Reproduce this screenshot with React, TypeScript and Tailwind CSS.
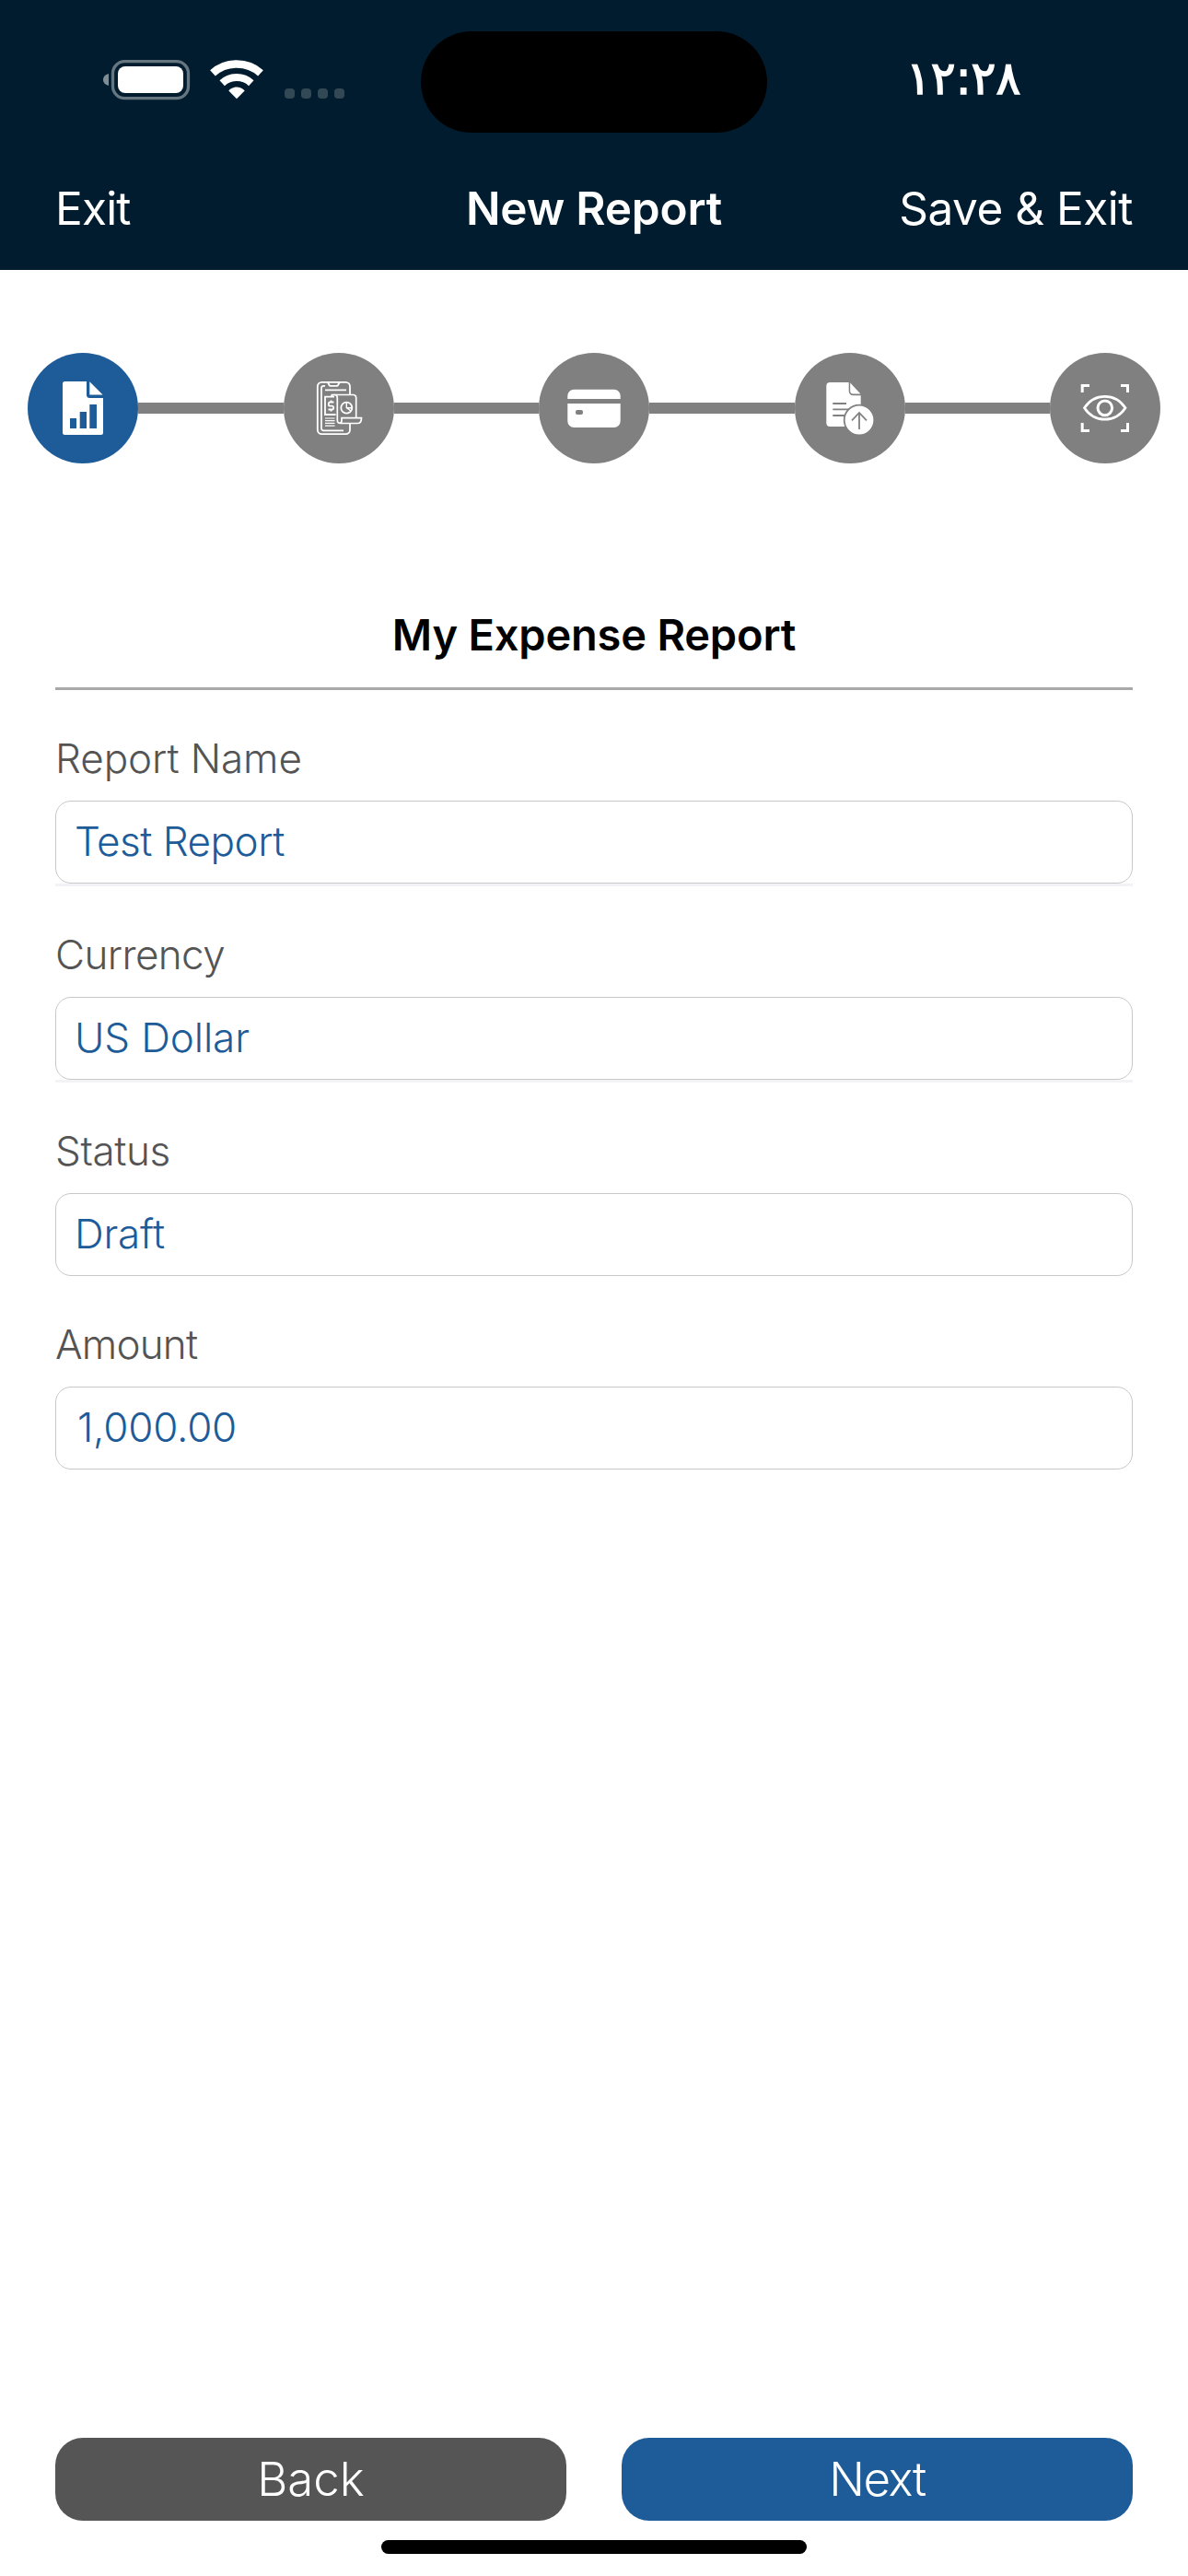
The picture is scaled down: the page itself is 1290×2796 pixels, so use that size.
import type { ReactNode } from "react";

const ReportIcon = () => (
  <svg viewBox="0 0 120 120" className="size-[120px]">
    <path fill="#fff" d="M40.5 31H64v14.5a3.5 3.5 0 0 0 3.5 3.5H82v37.5a2.5 2.5 0 0 1-2.5 2.5h-39a2.5 2.5 0 0 1-2.5-2.5v-53a2.5 2.5 0 0 1 2.5-2.5z" />
    <path fill="#fff" d="M67.3 31.2l14.3 14.2H67.3z" />
    <path fill="#1e5c99" d="M46 71h7v11h-7zM56.7 64h7.3v18h-7.3zM67.3 56H75v26h-7.7z" />
  </svg>
);

const PhoneReceiptIcon = () => (
  <svg viewBox="0 0 120 120" className="size-[120px]" fill="none" stroke="#fff" strokeWidth="1.8">
    <path d="M72 45v-8.5a4.700 4.700 0 0 0-4.700-4.700H41.500a4.700 4.700 0 0 0-4.700 4.700v47a4.700 4.700 0 0 0 4.700 4.700h25.800a4.700 4.700 0 0 0 4.700-4.700V77" />
    <path d="M45 35.800h-1.500a2.500 2.500 0 0 0-2.500 2.500v43.500a2.500 2.500 0 0 0 2.500 2.500H65" strokeWidth="1.700" />
    <path d="M48 32l1.500 3a1.500 1.500 0 0 0 1.300.8h7a1.500 1.500 0 0 0 1.300-.8l1.500-3M45 40.300h23" />
    <path d="M55 47.700H45v19.300h11.500" />
    <path d="M51.500 45.500H75.500a3.200 3.200 0 0 1 3.200 3.200V70M51.500 47.500c1-2 2.500-2.200 3.500-2.200 2.500 0 3.300 1.500 3.300 4V73c0 2.500 1.200 3.500 3.500 3.500H80c3 0 4.500-2 4.500-5.800H63v2.500c0 2-.8 3-2 3" strokeWidth="1.700" />
    <path d="M54.500 53.500h-4a1.700 1.700 0 0 0-1.700 1.700v.7a1.700 1.700 0 0 0 1.700 1.700h2a1.700 1.700 0 0 1 1.700 1.700v.5a1.700 1.700 0 0 1-1.700 1.700h-4M51.500 51.500v2M51.500 61.500v2" />
    <path d="M45 71h10.500M45 73.700h10.500M45 76.400h10.500M45 79.100h10.500" strokeWidth="1.200" />
    <circle cx="68.300" cy="59.700" r="6" />
    <path d="M68.300 53.700v6l4.800 3.300M68.300 59.700h6" strokeWidth="1.400" />
  </svg>
);

const CardIcon = () => (
  <svg viewBox="0 0 120 120" className="size-[120px]">
    <path fill="#fff" d="M38.300 39.700h43.400a7 7 0 0 1 7 7V50H31.300v-3.300a7 7 0 0 1 7-7zM31.300 55h57.400v19a7 7 0 0 1-7 7H38.300a7 7 0 0 1-7-7z" />
    <rect x="40" y="62" width="8" height="5" rx="2" fill="#808080" />
  </svg>
);

const UploadIcon = () => (
  <svg viewBox="0 0 120 120" className="size-[120px]" fill="none">
    <path fill="#fff" d="M38.300 32H58.700v9.500a4.800 4.800 0 0 0 4.800 4.800h8.200V80H38.300a4 4 0 0 1-4-4V36a4 4 0 0 1 4-4z" />
    <path fill="#fff" d="M60.200 32.500l11.200 12h-8a3.200 3.200 0 0 1-3.200-3.200z" />
    <path stroke="#808080" strokeWidth="1.800" d="M41.300 55H56M41.300 61.300h20M41.300 68H56" />
    <circle cx="70" cy="73" r="16.300" fill="#fff" stroke="#808080" strokeWidth="1.800" />
    <path stroke="#808080" strokeWidth="1.800" d="M70 83V65M62 73.300l8-8.300 8 8.300" />
  </svg>
);

const PreviewIcon = () => (
  <svg viewBox="0 0 120 120" className="size-[120px]" fill="none" stroke="#fff" strokeWidth="3">
    <path d="M43 35.500h-7.800V43M77 35.500h7.500V43M43 84.500h-7.800V76M77 84.500h7.500V76" />
    <path strokeWidth="2.700" d="M37.500 59.700C43 51.500 50 47.300 59.700 47.300S76.500 51.500 82 59.700C76.500 68 69.400 72.200 59.700 72.200S43 68 37.500 59.700z" />
    <ellipse cx="59.800" cy="59.800" rx="7.800" ry="7.900" />
  </svg>
);

const steps: { icon: ReactNode; active?: boolean }[] = [
  { icon: <ReportIcon />, active: true },
  { icon: <PhoneReceiptIcon /> },
  { icon: <CardIcon /> },
  { icon: <UploadIcon /> },
  { icon: <PreviewIcon /> },
];

const StatusIcons = () => (
  <svg viewBox="0 0 270 44" className="h-[44px] w-[270px]">
    <path d="M6 15v13C2.500 27 0 25 0 21.500S2.500 16 6 15z" fill="#808d95" />
    <rect x="10.500" y="1.700" width="82" height="40" rx="13" fill="none" stroke="#667680" strokeWidth="3.300" />
    <rect x="16" y="7" width="71" height="29" rx="8" fill="#fff" />
    <g fill="none" stroke="#fff">
      <path d="M119 14.300C133.500 1.200 156.500 1.200 171 14.300" strokeWidth="8.500" />
      <path d="M129.200 25.200C138 17 152 17 160.800 25.200" strokeWidth="8" />
    </g>
    <path d="M145 42.300l-8.700-8.900c4.500-5.300 12.900-5.300 17.400 0z" fill="#fff" />
    <g fill="#334855">
      <rect x="197" y="31" width="11" height="11" rx="4" />
      <rect x="215" y="31" width="11" height="11" rx="4" />
      <rect x="233" y="31" width="11" height="11" rx="4" />
      <rect x="251" y="31" width="11" height="11" rx="4" />
    </g>
  </svg>
);

type FieldProps = { label: string; value: string; line?: boolean; gap: string; labelClass: string; valueClass: string };

const Field = ({ label, value, line, gap, labelClass, valueClass }: FieldProps) => (
  <div className={gap}>
    <div className={"h-[54px] text-[44px] leading-[54px] font-light text-[#545454] " + labelClass}>{label}</div>
    <div className="mt-[19px] flex h-[90px] items-start rounded-[17px] border border-[#c8c8c8] pt-[16px] pl-[20px] text-[44px] leading-[54px] font-light text-[#1e5c99]">
      <span className={valueClass}>{value}</span>
    </div>
    <div className={line ? "h-[3px] bg-[#f2f2f7]" : "h-[3px]"} />
  </div>
);

export default function App() {
  return (
    <div className="flex h-[2796px] w-[1290px] flex-col bg-white font-['Inter',sans-serif]">
      <header className="h-[293px] bg-[#001c2e] text-white">
        <div className="flex h-[176px] items-start">
          <div className="w-[457px] pt-[65px] pl-[112px]">
            <StatusIcons />
          </div>
          <div className="mt-[34px] h-[110px] w-[376px] rounded-full bg-black" />
          <div className="flex-1 pt-[60px] pl-[151px] font-['DejaVu_Sans',sans-serif] text-[50px] leading-[50px] [-webkit-text-stroke:1.5px_white]">١٢:٢٨</div>
        </div>
        <div className="grid h-[100px] grid-cols-3 items-center px-[60px] text-[49.500px] leading-[60px]">
          <span className="tracking-[-0.8px]">Exit</span>
          <span className="text-center font-semibold tracking-[-0.2px]">New Report</span>
          <span className="text-right tracking-[-0.500px] whitespace-nowrap">Save &amp; Exit</span>
        </div>
      </header>

      <nav className="mt-[90px] flex items-center px-[30px]">
        {steps.map((s, i) => (
          <div key={i} className={i ? "flex flex-1 items-center" : "flex items-center"}>
            {i > 0 && <div className="h-[12px] flex-1 bg-[#808080]" />}
            <div className={s.active ? "size-[120px] rounded-full bg-[#1e5c99]" : "size-[120px] rounded-full bg-[#808080]"}>{s.icon}</div>
          </div>
        ))}
      </nav>

      <main className="mt-[156px] flex-1 px-[60px]">
        <h1 className="h-[87px] text-center text-[47px] leading-[60px] font-semibold tracking-[-0.2px] text-black">My Expense Report</h1>
        <div className="h-[3px] bg-[#a9a9a9]" />
        <Field label="Report Name" value="Test Report" line gap="mt-[47px]" labelClass="tracking-[-0.1px]" valueClass="tracking-[-0.500px]" />
        <Field label="Currency" value="US Dollar" line gap="mt-[47px]" labelClass="tracking-[-0.6px]" valueClass="tracking-[-0.1px]" />
        <Field label="Status" value="Draft" gap="mt-[47px]" labelClass="tracking-[-0.400px]" valueClass="tracking-[-0.2px]" />
        <Field label="Amount" value="1,000.00" gap="mt-[44px]" labelClass="tracking-[-0.8px]" valueClass="pl-[3px] tracking-[-0.2px]" />
      </main>

      <footer className="h-[150px] px-[60px] text-[51px] font-light text-white">
        <div className="grid grid-cols-2 gap-[60px]">
          <button className="h-[90px] rounded-[30px] bg-[#555555]">Back</button>
          <button className="h-[90px] rounded-[30px] bg-[#1e5c99] tracking-[-1.4px]">Next</button>
        </div>
        <div className="mx-auto mt-[21px] h-[15px] w-[462px] rounded-full bg-black" />
      </footer>
    </div>
  );
}
